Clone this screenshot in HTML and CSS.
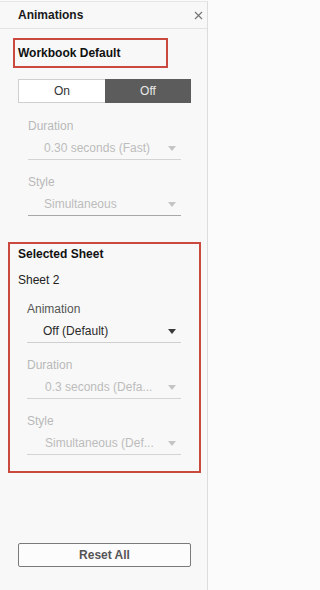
FILE: index.html
```html
<!DOCTYPE html>
<html>
<head>
<meta charset="utf-8">
<link rel="stylesheet" href="styles.css">
</head>
<body>
<div class="panel">
  <div class="header">
    <span class="title">Animations</span>
    <svg class="close" width="9" height="9" viewBox="0 0 9 9"><path d="M1 1L8 8M8 1L1 8" stroke="#777" stroke-width="1.2" fill="none"/></svg>
  </div>

  <div class="wb-box">Workbook Default</div>

  <div class="toggle">
    <div class="opt on">On</div>
    <div class="opt off">Off</div>
  </div>

  <div class="fields wb-fields">
    <div class="field">
      <div class="label disabled">Duration</div>
      <div class="select disabled light-line"><span class="val">0.30 seconds (Fast)</span><span class="arrow"></span></div>
    </div>
    <div class="field">
      <div class="label disabled">Style</div>
      <div class="select disabled dark-line"><span class="val">Simultaneous</span><span class="arrow"></span></div>
    </div>
  </div>

  <div class="sel-box">
    <div class="sel-title">Selected Sheet</div>
    <div class="sheet">Sheet 2</div>
    <div class="fields sel-fields">
      <div class="field">
        <div class="label">Animation</div>
        <div class="select active"><span class="val">Off (Default)</span><span class="arrow"></span></div>
      </div>
      <div class="field">
        <div class="label disabled">Duration</div>
        <div class="select disabled light-line"><span class="val shift">0.3 seconds (Defa...</span><span class="arrow"></span></div>
      </div>
      <div class="field">
        <div class="label disabled">Style</div>
        <div class="select disabled light-line"><span class="val shift">Simultaneous (Def...</span><span class="arrow"></span></div>
      </div>
    </div>
  </div>

  <button class="reset">Reset All</button>
</div>
</body>
</html>
```

FILE: styles.css
```css
html, body {
  margin: 0;
  padding: 0;
  background: #fbfbfb;
}
body {
  font-family: "Liberation Sans", Arial, sans-serif;
  font-size: 12px;
  color: #222;
}
.panel {
  width: 208px;
  height: 590px;
  box-sizing: border-box;
  background: #f8f8f8;
  border-right: 1px solid #dcdcdc;
  border-top: 1px solid #e6e6e6;
  margin-top: 1px;
  display: flex;
  flex-direction: column;
}
.header {
  height: 26px;
  border-bottom: 1px solid #e2e2e2;
  display: flex;
  align-items: center;
  justify-content: space-between;
  padding: 0 4px 0 18px;
}
.title {
  font-weight: bold;
  color: #1a1a1a;
  line-height: 16px;
}
.close {
  display: block;
}
.wb-box {
  margin: 9px 0 0 13px;
  width: 155px;
  height: 30px;
  box-sizing: border-box;
  border: 2px solid #c9493f;
  padding-left: 3px;
  display: flex;
  align-items: center;
  font-weight: bold;
  color: #111;
}
.toggle {
  margin: 11px 0 0 18px;
  width: 173px;
  height: 24px;
  display: flex;
}
.opt {
  display: flex;
  align-items: center;
  justify-content: center;
  box-sizing: border-box;
}
.opt.on {
  width: 87px;
  background: #fff;
  border: 1px solid #cfcfcf;
  border-right: none;
  color: #333;
}
.opt.off {
  width: 86px;
  background: #5c5c5c;
  color: #e8e8e8;
}
.fields {
  display: flex;
  flex-direction: column;
  gap: 14px;
}
.wb-fields {
  margin: 15px 0 0 28px;
  width: 153px;
}
.label {
  line-height: 16px;
  color: #555;
}
.label.disabled {
  color: #b9b9b9;
}
.select {
  display: flex;
  align-items: center;
  justify-content: space-between;
  padding: 6px 5px 3px 16px;
  line-height: 16px;
  border-bottom: 1px solid #d4d4d4;
}
.select.dark-line {
  border-bottom-color: #a8a8a8;
}
.select.active {
  color: #2a2a2a;
  border-bottom-color: #cfcfcf;
}
.select.disabled {
  color: #bcbcbc;
}
.val.shift {
  margin-left: 2px;
}
.arrow {
  width: 0;
  height: 0;
  border-left: 4px solid transparent;
  border-right: 4px solid transparent;
  border-top: 5px solid #c4c4c4;
  margin-top: 1px;
}
.select.active .arrow {
  border-top-color: #3a3a3a;
}
.sel-box {
  margin: 26px 0 0 8px;
  width: 193px;
  height: 231px;
  box-sizing: border-box;
  border: 2px solid #c9493f;
  padding: 2px 0 0 8px;
}
.sel-title {
  font-weight: bold;
  line-height: 16px;
  color: #111;
}
.sheet {
  margin-top: 10px;
  line-height: 16px;
  color: #222;
}
.sel-fields {
  margin: 13px 0 0 9px;
  width: 154px;
}
.reset {
  margin: 70px 0 0 18px;
  width: 173px;
  height: 24px;
  box-sizing: border-box;
  background: #fcfcfc;
  border: 1px solid #7a7a7a;
  border-radius: 2px;
  font-family: "Liberation Sans", Arial, sans-serif;
  font-size: 12px;
  font-weight: bold;
  color: #555;
  padding: 0;
}
```
